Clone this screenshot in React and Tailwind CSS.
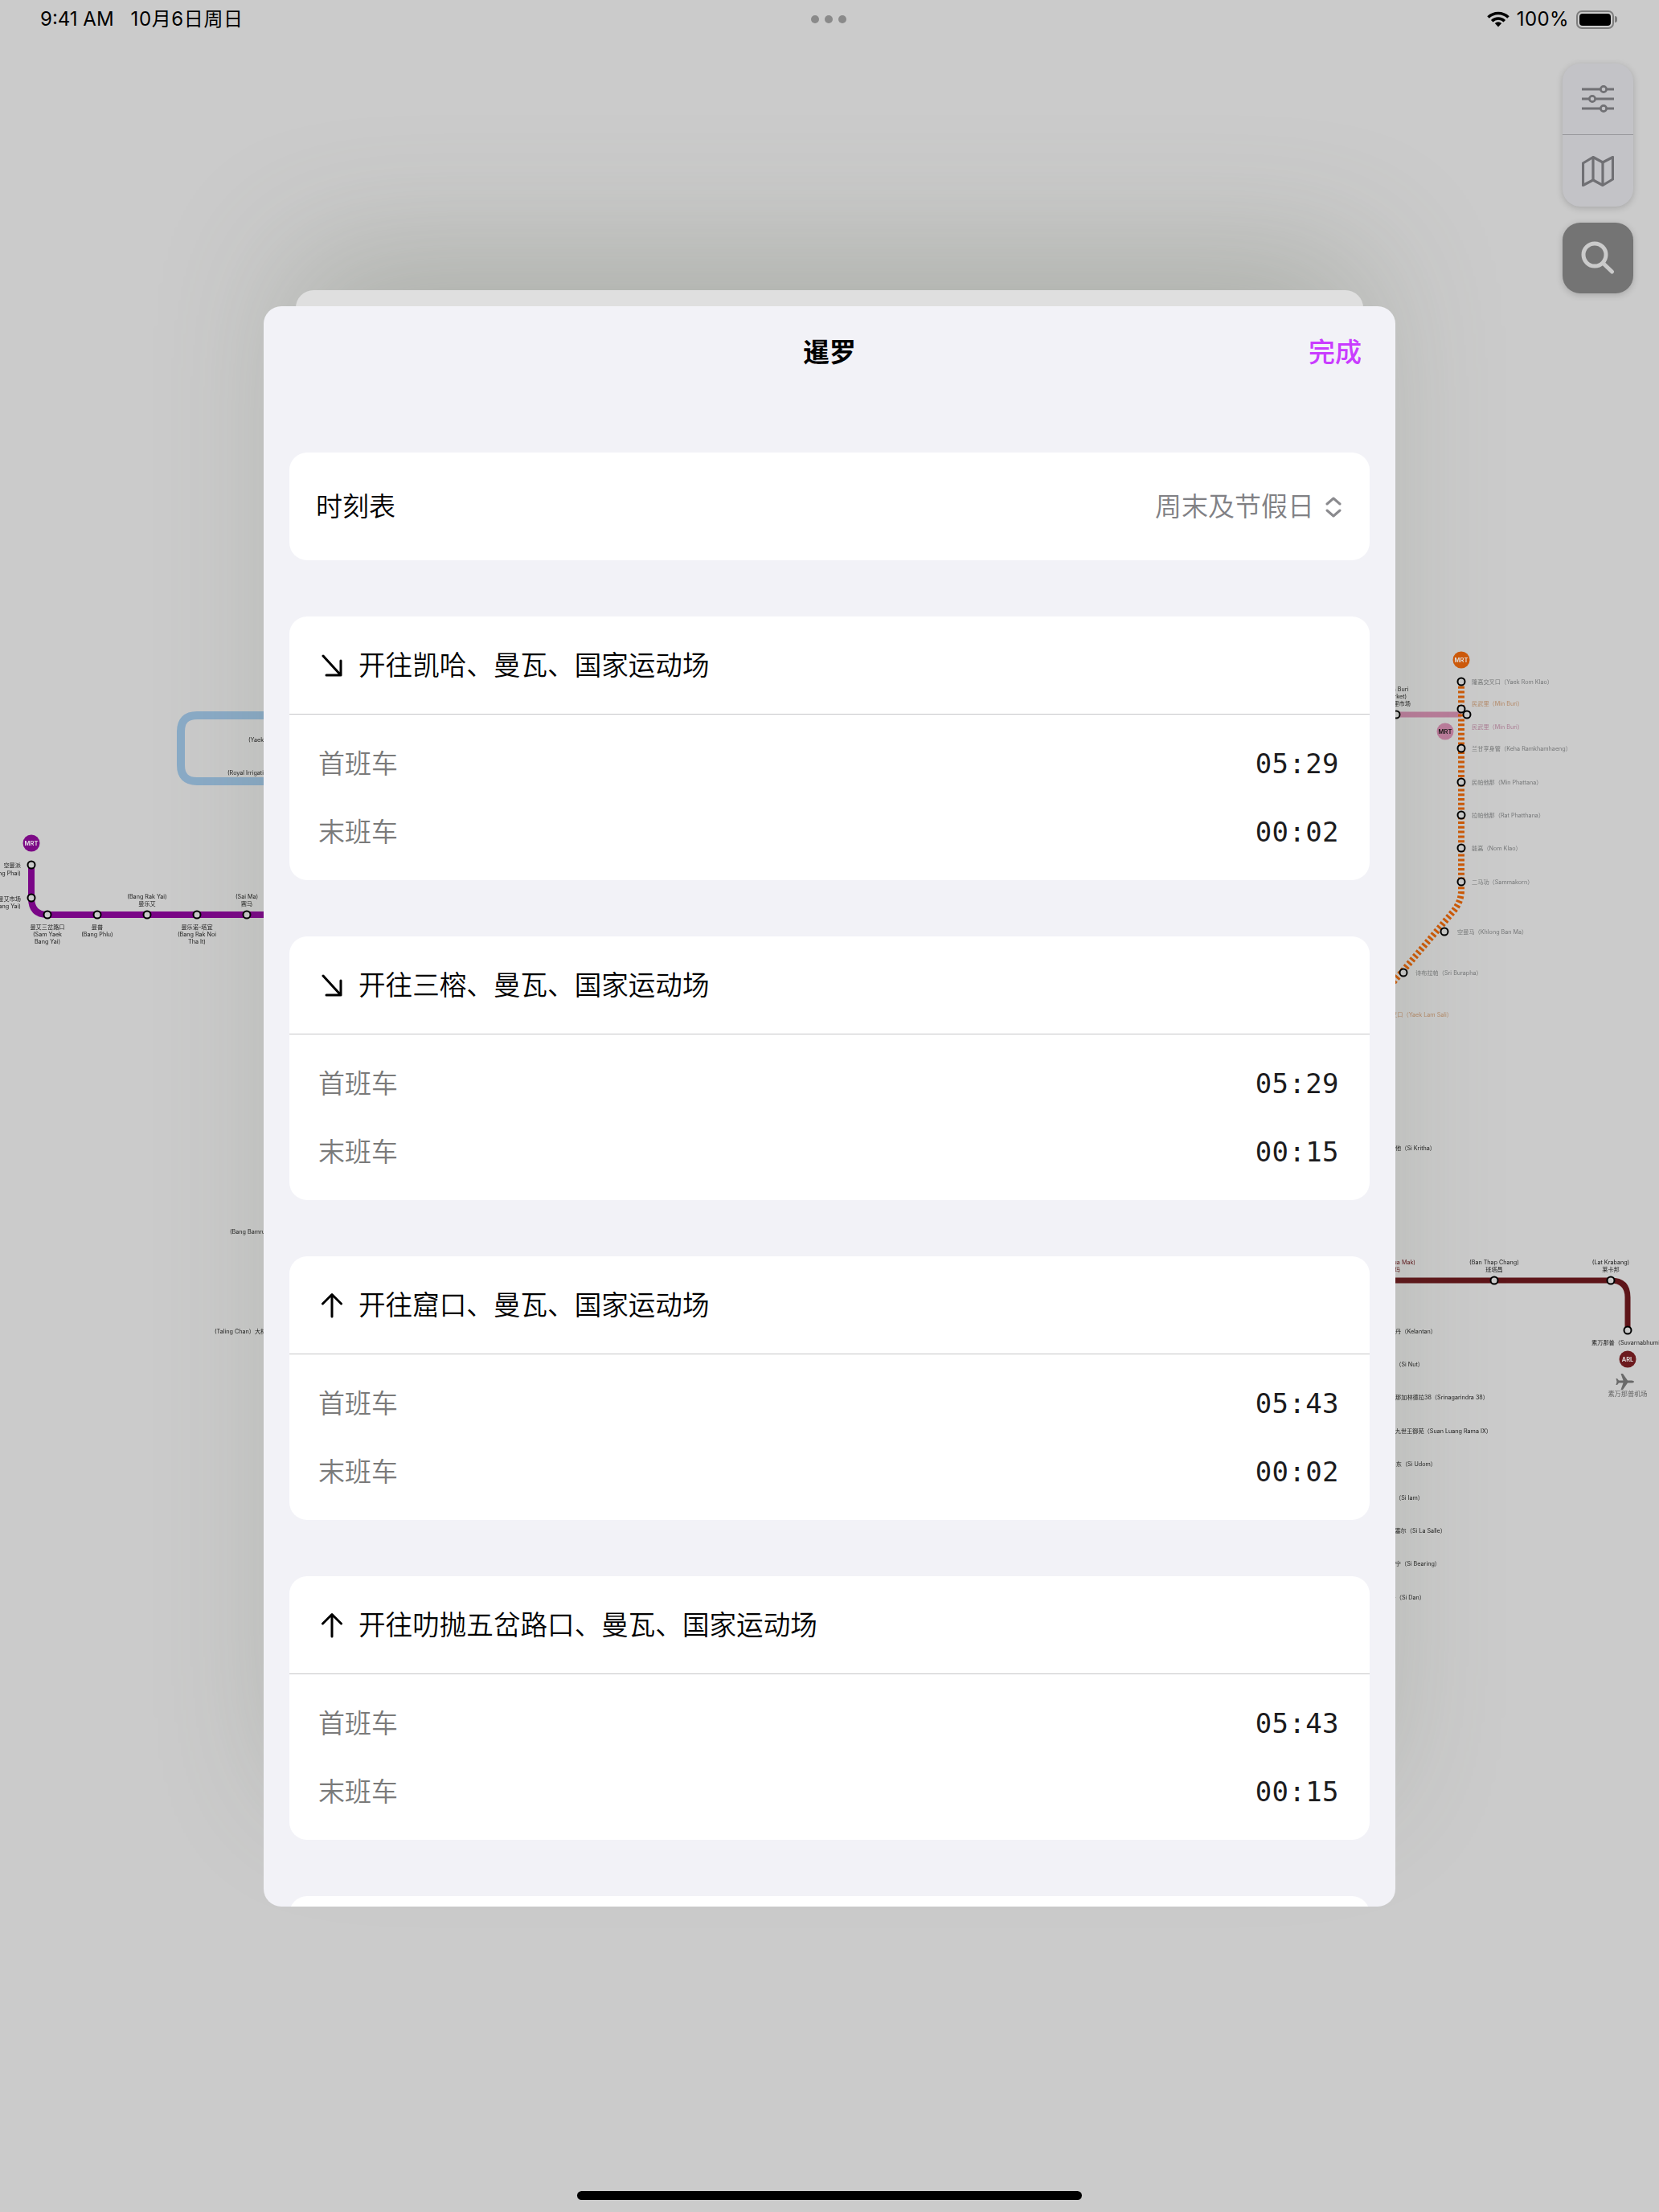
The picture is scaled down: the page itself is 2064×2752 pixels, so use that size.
const routes = [
  {
    title: "开往凯哈、曼瓦、国家运动场",
    dir: "down",
    first: "05:29",
    last: "00:02",
  },
  {
    title: "开往三榕、曼瓦、国家运动场",
    dir: "down",
    first: "05:29",
    last: "00:15",
  },
  {
    title: "开往窟口、曼瓦、国家运动场",
    dir: "up",
    first: "05:43",
    last: "00:02",
  },
  {
    title: "开往叻抛五岔路口、曼瓦、国家运动场",
    dir: "up",
    first: "05:43",
    last: "00:15",
  },
];

// Labels on the map behind the sheet: [x, y, text, anchor, colour]
const mapLabels = [
  [26, 1079, "空曼派", "end"],
  [26, 1089, "(Khlong Bang Phai)", "end"],
  [26, 1121, "曼艾市场", "end"],
  [26, 1130, "(Talad Bang Yai)", "end"],
  [59, 1156, "曼艾三岔路口", "middle"],
  [59, 1165, "(Sam Yaek", "middle"],
  [59, 1174, "Bang Yai)", "middle"],
  [121, 1156, "曼普", "middle"],
  [121, 1165, "(Bang Phlu)", "middle"],
  [183, 1118, "(Bang Rak Yai)", "middle"],
  [183, 1127, "曼乐艾", "middle"],
  [245, 1156, "曼乐诺-塔宜", "middle"],
  [245, 1165, "(Bang Rak Noi", "middle"],
  [245, 1174, "Tha It)", "middle"],
  [307, 1118, "(Sai Ma)", "middle"],
  [307, 1127, "赛马", "middle"],
  [309, 923, "(Yaek", "start"],
  [283, 964, "(Royal Irrigation)", "start"],
  [286, 1535, "(Bang Bamru)", "start"],
  [267, 1659, "(Taling Chan）大林", "start"],
  [1737, 860, "(Min Buri", "middle"],
  [1737, 869, "Market)", "middle"],
  [1737, 878, "民武里市场", "middle"],
  [1831, 851, "隆高交叉口（Yaek Rom Klao）", "start", "#77797a"],
  [1831, 878, "民武里（Min Buri）", "start", "#b58a68"],
  [1831, 907, "民武里（Min Buri）", "start", "#ab7d94"],
  [1831, 934, "兰甘亨身管（Keha Ramkhamhaeng）", "start", "#77797a"],
  [1831, 976, "民帕他那（Min Phattana）", "start", "#77797a"],
  [1831, 1017, "拉帕他那（Rat Phatthana）", "start", "#77797a"],
  [1831, 1058, "能高（Nom Klao）", "start", "#77797a"],
  [1831, 1100, "二马功（Sammakorn）", "start", "#77797a"],
  [1813, 1162, "空曼马（Khlong Ban Ma）", "start", "#77797a"],
  [1761, 1213, "诗布拉帕（Sri Burapha）", "start", "#77797a"],
  [1807, 1265, "叉口（Yaek Lam Sali）", "end", "#b58a68"],
  [1786, 1431, "斯里柯他（Si Kritha）", "end"],
  [1761, 1573, "(Hua Mak)", "end", "#5e1519"],
  [1742, 1582, "华玛", "end", "#5e1519"],
  [1859, 1573, "(Ban Thap Chang)", "middle"],
  [1859, 1582, "班塔昌", "middle"],
  [2004, 1573, "(Lat Krabang)", "middle"],
  [2004, 1582, "莱卡邦", "middle"],
  [1980, 1673, "素万那普（Suvarnabhumi）", "start"],
  [1787, 1659, "吉兰丹（Kelantan）", "end"],
  [1771, 1700, "斯里努（Si Nut）", "end"],
  [1852, 1741, "诗琳那加林德拉38（Srinagarindra 38）", "end"],
  [1856, 1783, "诗里銮拉玛九世王御苑（Suan Luang Rama IX）", "end"],
  [1787, 1824, "诗里乌东（Si Udom）", "end"],
  [1771, 1866, "诗里任（Si Iam）", "end"],
  [1799, 1907, "诗里拉塞尔（Si La Salle）", "end"],
  [1792, 1948, "诗里北宁（Si Bearing）", "end"],
  [1773, 1990, "诗里丹（Si Dan）", "end"],
];

const stations = [
  [39, 1076],
  [39, 1117],
  [59, 1138],
  [121, 1138],
  [183, 1138],
  [245, 1138],
  [307, 1138],
  [1737, 889],
  [1818, 848],
  [1818, 882],
  [1825, 889],
  [1818, 931],
  [1818, 973],
  [1818, 1014],
  [1818, 1055],
  [1818, 1097],
  [1797, 1159],
  [1746, 1210],
  [1859, 1593],
  [2004, 1593],
  [2025, 1655],
];

const badges = [
  [39, 1049, "MRT", "#7c0a86", "#e6e6e6"],
  [1818, 821, "MRT", "#cf5a0b", "#e6e6e6"],
  [1798, 910, "MRT", "#bc7c9c", "#111111"],
  [2025, 1691, "ARL", "#6c1a1e", "#e6e6e6"],
];

const MapBackdrop = () => (
  <svg
    className="absolute inset-0 blur-[0.4px]"
    width="2064"
    height="2752"
    viewBox="0 0 2064 2752"
    fill="none"
  >
    {/* blue loop */}
    <path
      d="M340 890 H245 Q225 890 225 910 V952 Q225 972 245 972 H340"
      stroke="#8aabc7"
      strokeWidth="10"
    />
    {/* purple line */}
    <path
      d="M39 1076 V1117 Q39 1138 59 1138 H340"
      stroke="#7a0687"
      strokeWidth="8"
    />
    {/* pink line */}
    <path d="M1730 889 H1818" stroke="#b97c9a" strokeWidth="7" />
    {/* orange line */}
    <path
      d="M1818 848 V1108 Q1818 1122 1808 1134 L1730 1226"
      stroke="#cc5a08"
      strokeWidth="8"
      strokeDasharray="3 2.8"
    />
    {/* airport link */}
    <path
      d="M1730 1593 H2004 Q2025 1593 2025 1614 V1655"
      stroke="#5e1519"
      strokeWidth="7"
    />
    {stations.map(([cx, cy]) => (
      <circle
        key={`${cx}-${cy}`}
        cx={cx}
        cy={cy}
        r="4.5"
        fill="#cbcbcb"
        stroke="#000"
        strokeWidth="2"
      />
    ))}
    {badges.map(([cx, cy, label, bg, fg]) => (
      <g key={`${cx}-${cy}`}>
        <circle cx={cx} cy={cy} r="10.5" fill={bg} />
        <text
          x={cx}
          y={cy + 2.7}
          textAnchor="middle"
          fontSize="7.5"
          fontWeight="600"
          fill={fg}
        >
          {label}
        </text>
      </g>
    ))}
    {mapLabels.map(([x, y, text, anchor, color]) => (
      <text
        key={`${x}-${y}`}
        x={x}
        y={y}
        textAnchor={anchor}
        fontSize="7.2"
        fill={color || "#1c1c1c"}
      >
        {text}
      </text>
    ))}
    {/* plane */}
    <path
      d="M2033 1719 C2033 1718 2031 1717.5 2029 1717.5 H2025 L2019 1709 H2016.5 L2019.5 1717.5 H2014 L2012 1715 H2010.5 L2011.5 1719 L2010.5 1723 H2012 L2014 1720.5 H2019.5 L2016.5 1729 H2019 L2025 1720.5 H2029 C2031 1720.5 2033 1720 2033 1719 Z"
      fill="#6a6a6a"
    />
    <text x="2025" y="1737" textAnchor="middle" fontSize="8.2" fill="#666">
      素万那普机场
    </text>
  </svg>
);

const StatusBar = () => (
  <div className="relative grid h-[48px] grid-cols-3 items-center pl-[50px] pr-[52px] text-[24px] text-black">
    <div className="flex gap-[21px] whitespace-nowrap">
      <span>9:41 AM</span>
      <span className="tracking-[0.6px]">10月6日周日</span>
    </div>
    <div className="flex justify-center gap-[7px]">
      <span className="size-[10px] rounded-full bg-[#8a8a8a]" />
      <span className="size-[10px] rounded-full bg-[#8a8a8a]" />
      <span className="size-[10px] rounded-full bg-[#8a8a8a]" />
    </div>
    <div className="flex items-center justify-end gap-[9px]">
      <svg width="28" height="20" viewBox="0 0 28 20" fill="none">
        <path d="M1.5 7.5 A18 18 0 0 1 26.5 7.5" stroke="#000" strokeWidth="3.6" />
        <path d="M6.2 12.2 A11 11 0 0 1 21.8 12.2" stroke="#000" strokeWidth="3.6" />
        <path d="M14 19.5 L9.8 15 A6 6 0 0 1 18.2 15 Z" fill="#000" />
      </svg>
      <span className="tracking-[0.4px]">100%</span>
      <div className="flex items-center">
        <div className="h-[23px] w-[47px] rounded-[7px] border-2 border-[#7d7d7d] p-[2px]">
          <div className="h-full w-full rounded-[4px] bg-black" />
        </div>
        <div className="ml-[1px] h-[8px] w-[3px] rounded-r-full bg-[#7d7d7d]" />
      </div>
    </div>
  </div>
);

const MapTools = () => (
  <div className="absolute right-[32px] top-[79px] flex w-[88px] flex-col gap-[20px]">
    <div className="flex flex-col rounded-[22px] bg-[#c3c3c7] shadow-[0_2px_8px_rgba(0,0,0,0.18)]">
      <div className="flex h-[89px] items-center justify-center border-b border-[#98989c]">
        <svg width="40" height="34" viewBox="0 0 40 34" fill="none" stroke="#707074">
          <path d="M0 5 H40 M0 17 H40 M0 29 H40" strokeWidth="3" strokeLinecap="round" />
          <circle cx="27" cy="5" r="3.6" fill="#c3c3c7" strokeWidth="2.6" />
          <circle cx="13" cy="17" r="3.6" fill="#c3c3c7" strokeWidth="2.6" />
          <circle cx="27" cy="29" r="3.6" fill="#c3c3c7" strokeWidth="2.6" />
        </svg>
      </div>
      <div className="flex h-[89px] items-center justify-center">
        <svg
          width="40"
          height="38"
          viewBox="0 0 40 38"
          fill="none"
          stroke="#707074"
          strokeWidth="3.2"
          strokeLinejoin="round"
        >
          <path d="M1.5 9 L14 1.5 L26 8 L38.5 1.5 V29 L26 36.5 L14 30 L1.5 36.5 Z" />
          <path d="M14 1.5 V30 M26 8 V36.5" />
        </svg>
      </div>
    </div>
    <div className="flex h-[88px] items-center justify-center rounded-[22px] bg-[#747474] shadow-[0_2px_8px_rgba(0,0,0,0.18)]">
      <svg width="42" height="42" viewBox="0 0 42 42" fill="none" stroke="#cbcbcb" strokeWidth="5" strokeLinecap="round">
        <circle cx="17" cy="17" r="14" />
        <path d="M27.5 27.5 L38.5 38" />
      </svg>
    </div>
  </div>
);

const DirectionArrow = ({ dir }) => (
  <svg
    width="26"
    height="32"
    viewBox="0 0 26 32"
    fill="none"
    stroke="#000"
    strokeWidth="3"
    strokeLinecap="round"
    strokeLinejoin="round"
  >
    {dir === "up" ? (
      <path d="M13 30 V2.5 M1.5 14 L13 2.5 L24.5 14" />
    ) : (
      <path d="M2 4 L24 28 M24 10 V28 H6" />
    )}
  </svg>
);

const RouteCard = ({ route }) => (
  <div className="rounded-[22px] bg-white">
    <div className="flex h-[122px] items-center gap-[20px] border-b border-[#c6c6c8] pl-[40px]">
      <DirectionArrow dir={route.dir} />
      <span className="pt-[2px] text-[33.6px] font-[350] text-black">{route.title}</span>
    </div>
    <div className="flex flex-col pb-[17px] pt-[19px] pl-[36px] pr-[38px]">
      <div className="flex h-[85px] items-center justify-between">
        <span className="text-[33px] font-[350] text-[#7a7a7a]">首班车</span>
        <span className="font-['DejaVu_Sans_Mono',monospace] text-[34px] tracking-[0.4px] text-[#1c1c1e]">
          {route.first}
        </span>
      </div>
      <div className="flex h-[85px] items-center justify-between">
        <span className="text-[33px] font-[350] text-[#7a7a7a]">末班车</span>
        <span className="font-['DejaVu_Sans_Mono',monospace] text-[34px] tracking-[0.4px] text-[#1c1c1e]">
          {route.last}
        </span>
      </div>
    </div>
  </div>
);

const ScheduleSheet = () => (
  <div className="absolute left-[328px] top-[381px] h-[1991px] w-[1408px] overflow-hidden rounded-[22px] bg-[#f2f2f7]">
    <div className="grid h-[114px] grid-cols-3 items-center px-[42px] pt-[2px]">
      <span />
      <span className="text-center text-[33px] font-bold text-black">暹罗</span>
      <span className="text-right text-[33px] font-medium text-[#c93cff]">完成</span>
    </div>
    <div className="mt-[68px] flex flex-col gap-[70px] px-[32px]">
      <div className="flex h-[134px] items-center justify-between rounded-[22px] bg-white pl-[33px] pr-[35px] pt-[2px]">
        <span className="text-[33px] font-[350] text-black">时刻表</span>
        <div className="flex items-center gap-[14px]">
          <span className="text-[33px] font-[350] text-[#808084]">周末及节假日</span>
          <svg
            width="20"
            height="26"
            viewBox="0 0 20 26"
            fill="none"
            stroke="#8a8a8e"
            strokeWidth="3"
            strokeLinecap="round"
            strokeLinejoin="round"
          >
            <path d="M2 9 L10 2 L18 9 M2 17 L10 24 L18 17" />
          </svg>
        </div>
      </div>
      {routes.map((route) => (
        <RouteCard key={route.title} route={route} />
      ))}
      <div className="h-[328px] rounded-[22px] bg-white" />
    </div>
  </div>
);

export default function App() {
  return (
    <div className="relative h-[2752px] w-[2064px] overflow-hidden bg-[#cbcbcb] font-['Inter','Noto_Sans_CJK_SC',sans-serif]">
      <MapBackdrop />
      <StatusBar />
      <MapTools />
      <div className="absolute left-[368px] top-[361px] h-[1900px] w-[1328px] rounded-[22px] bg-[#dfdfdf] shadow-[0_-40px_170px_rgba(90,100,80,0.28)]" />
      <ScheduleSheet />
      <div className="absolute bottom-[15px] left-1/2 h-[11px] w-[628px] -translate-x-1/2 rounded-full bg-black" />
    </div>
  );
}
